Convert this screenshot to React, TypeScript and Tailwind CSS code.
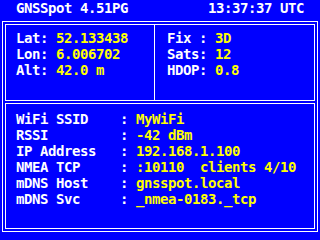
const mono = "font-['DejaVu_Sans_Mono',monospace] font-bold text-[14px] leading-[16px] tracking-[-0.43px] whitespace-pre";

function Row({ label, value }: { label: string; value: string }) {
  return (
    <div className={mono}>
      <span className="text-white">{label}</span>
      <span className="text-[#ffff00]">{value}</span>
    </div>
  );
}

export default function App() {
  return (
    <div className="h-[240px] w-[320px] overflow-hidden bg-[#0000ff]">
      <div className={`flex h-[21px] justify-between px-4 text-white ${mono}`}>
        <span>GNSSpot 4.51PG</span>
        <span>13:37:37 UTC</span>
      </div>
      <div className="ml-[2px] flex h-[211px] w-[316px] flex-col gap-[2px] border border-white p-[2px]">
        <div className="flex h-[77px] border border-white">
          <div className="w-[149px] border-r border-white pl-[10px] pt-[5px]">
            <Row label="Lat: " value="52.133438" />
            <Row label="Lon: " value="6.006702" />
            <Row label="Alt: " value="42.0 m" />
          </div>
          <div className="pl-[12px] pt-[5px]">
            <Row label="Fix : " value="3D" />
            <Row label="Sats: " value="12" />
            <Row label="HDOP: " value="0.8" />
          </div>
        </div>
        <div className="h-[126px] border border-white pl-[10px] pt-[7px]">
          <Row label="WiFi SSID    : " value="MyWiFi" />
          <Row label="RSSI         : " value="-42 dBm" />
          <Row label="IP Address   : " value="192.168.1.100" />
          <Row label="NMEA TCP     : " value=":10110  clients 4/10" />
          <Row label="mDNS Host    : " value="gnsspot.local" />
          <Row label="mDNS Svc     : " value="_nmea-0183._tcp" />
        </div>
      </div>
    </div>
  );
}
